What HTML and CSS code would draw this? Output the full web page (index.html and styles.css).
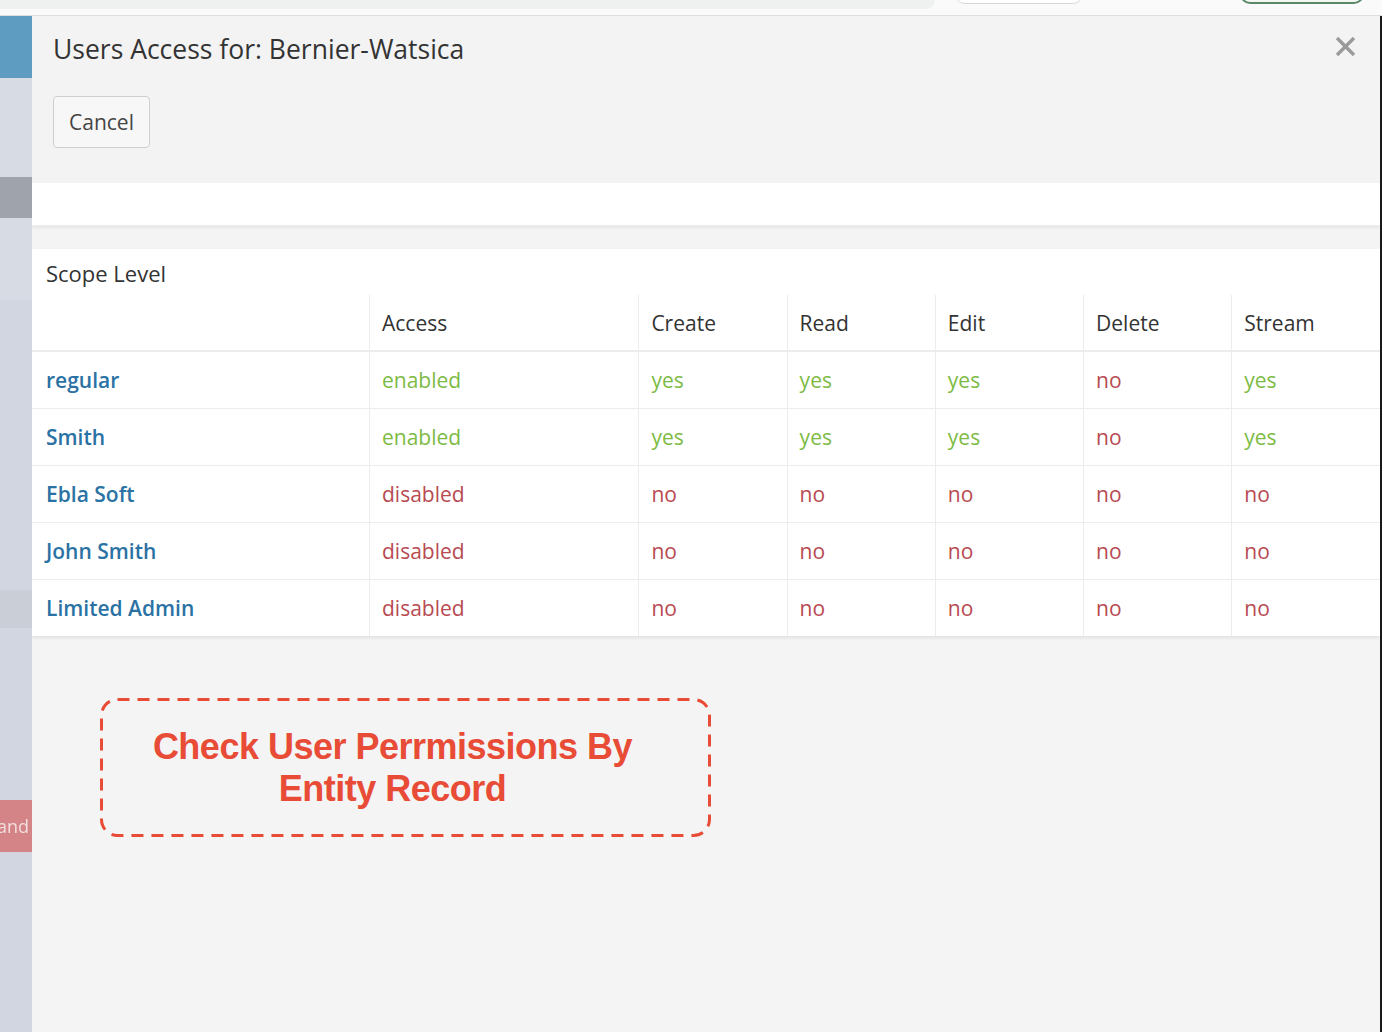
FILE: index.html
```html
<!DOCTYPE html>
<html lang="en">
<head>
<meta charset="utf-8">
<title>Users Access</title>
<link rel="stylesheet" href="styles.css">
</head>
<body>
<div class="page">
  <div class="topbar">
    <div class="pill"></div>
    <div class="ghost-btn"></div>
    <div class="ghost-btn green"></div>
  </div>
  <div class="main">
    <div class="backdrop">
      <div class="band blue"></div>
      <div class="band light h99"></div>
      <div class="band dark"></div>
      <div class="band light h82"></div>
      <div class="band lighter h290"></div>
      <div class="band mid"></div>
      <div class="band lighter h170"></div>
      <div class="band red"><span>and</span></div>
      <div class="band lighter fill"></div>
    </div>
    <div class="modal">
      <div class="modal-header">
        <div class="title-row">
          <h1 class="title">Users Access for: Bernier-Watsica</h1>
          <svg class="close" width="21" height="21" viewBox="0 0 21 21"><path d="M2 2 L19 19 M19 2 L2 19" stroke="#9a9a9a" stroke-width="3.4" stroke-linecap="butt"/></svg>
        </div>
        <button class="btn">Cancel</button>
      </div>
      <div class="white-band"></div>
      <div class="panel">
        <div class="scope">Scope Level</div>
        <table class="grid">
          <colgroup>
            <col class="c-name"><col class="c-access"><col class="c-op"><col class="c-op"><col class="c-op"><col class="c-op"><col class="c-op">
          </colgroup>
          <thead>
            <tr><th></th><th>Access</th><th>Create</th><th>Read</th><th>Edit</th><th>Delete</th><th>Stream</th></tr>
          </thead>
          <tbody>
            <tr><td class="name">regular</td><td class="ok">enabled</td><td class="ok">yes</td><td class="ok">yes</td><td class="ok">yes</td><td class="no">no</td><td class="ok">yes</td></tr>
            <tr><td class="name">Smith</td><td class="ok">enabled</td><td class="ok">yes</td><td class="ok">yes</td><td class="ok">yes</td><td class="no">no</td><td class="ok">yes</td></tr>
            <tr><td class="name">Ebla Soft</td><td class="no">disabled</td><td class="no">no</td><td class="no">no</td><td class="no">no</td><td class="no">no</td><td class="no">no</td></tr>
            <tr><td class="name">John Smith</td><td class="no">disabled</td><td class="no">no</td><td class="no">no</td><td class="no">no</td><td class="no">no</td><td class="no">no</td></tr>
            <tr><td class="name">Limited Admin</td><td class="no">disabled</td><td class="no">no</td><td class="no">no</td><td class="no">no</td><td class="no">no</td><td class="no">no</td></tr>
          </tbody>
        </table>
      </div>
      <div class="note">
        <svg class="note-frame" width="611" height="139" viewBox="0 0 611 139"><rect x="1.5" y="1.5" width="608" height="136" rx="16" ry="16" fill="none" stroke="#e84b36" stroke-width="3" stroke-dasharray="12 8"/></svg>
        <p>Check User Perrmissions By<br>Entity Record</p>
      </div>
    </div>
    <div class="edge"></div>
  </div>
</div>
</body>
</html>
```

FILE: styles.css
```css
* { box-sizing: border-box; }
html, body { margin: 0; padding: 0; }
body {
  width: 1382px;
  height: 1032px;
  overflow: hidden;
  background: #f4f4f4;
  font-family: "Open Sans", "Noto Sans", sans-serif;
  color: #333;
}
.page { width: 1382px; height: 1032px; display: flex; flex-direction: column; }

.topbar {
  height: 16px;
  flex: none;
  background: #fafafa;
  border-bottom: 1px solid #dedede;
  display: flex;
  align-items: flex-start;
  overflow: hidden;
}
.pill {
  width: 935px;
  height: 9px;
  background: #eff0f0;
  border-bottom-right-radius: 12px;
}
.ghost-btn {
  width: 128px;
  height: 20px;
  margin-top: -16px;
  margin-left: 20px;
  border: 1px solid #d8d8d8;
  border-radius: 10px;
  background: #fff;
}
.ghost-btn.green {
  margin-left: 157px;
  width: 124px;
  border: 2px solid #5a8a68;
  background: #f4f7f4;
}

.main { flex: 1; display: flex; min-height: 0; }

.backdrop {
  width: 32px;
  flex: none;
  display: flex;
  flex-direction: column;
  overflow: hidden;
  box-shadow: inset -4px 0 4px -2px rgba(0,0,0,0.18);
  filter: blur(0.6px);
  background: #d1d6e0;
}
.band { flex: none; }
.band.blue { height: 62px; background: #5f9cc2; }
.band.light { background: #d6dbe4; }
.band.h99 { height: 99px; }
.band.dark { height: 41px; background: #9fa4ac; }
.band.h82 { height: 82px; }
.band.lighter { background: #d1d6e0; }
.band.h290 { height: 290px; }
.band.mid { height: 38px; background: #c9ced7; }
.band.h170 { height: 172px; }
.band.red {
  height: 52px;
  background: #d48486;
  color: #f1dede;
  font-size: 18px;
  line-height: 52px;
  margin-left: -3px;
  overflow: hidden;
  white-space: nowrap;
}
.band.fill { flex: 1; }

.modal {
  flex: 1;
  display: flex;
  flex-direction: column;
  background: #f4f4f4;
  min-width: 0;
}
.edge { width: 2px; flex: none; background: #1a1a1a; }

.modal-header {
  background: #f3f3f3;
  height: 167px;
  padding: 15px 24px 0 21px;
}
.title-row {
  display: flex;
  justify-content: space-between;
  align-items: flex-start;
}
.title {
  margin: 0;
  font-weight: 400;
  font-size: 26.5px;
  line-height: 36px;
  color: #333;
}
.close { margin-top: 5px; }
.btn {
  margin-top: 29px;
  width: 97px;
  height: 52px;
  border: 1px solid #cfcfcf;
  border-radius: 4px;
  background: #f7f7f7;
  font-family: "Open Sans", sans-serif;
  font-size: 21px;
  color: #444;
  padding: 0;
}

.white-band {
  height: 43px;
  background: #fff;
  box-shadow: 0 2px 3px rgba(0,0,0,0.06);
  border-bottom: 1px solid #ececec;
}
.panel {
  margin-top: 23px;
  background: #fff;
  box-shadow: 0 2px 3px rgba(0,0,0,0.08);
}
.scope {
  height: 46px;
  padding-left: 14px;
  font-size: 22px;
  line-height: 48px;
  color: #333;
}
.grid {
  width: 100%;
  border-collapse: collapse;
  table-layout: fixed;
  font-size: 21px;
}
.c-name { width: 337px; }
.c-access { width: 269px; }
.c-op { width: 148px; }
.grid th, .grid td {
  text-align: left;
  padding: 0 12px;
  border-left: 1px solid #ececec;
}
.grid th:first-child, .grid td:first-child { border-left: none; padding-left: 14px; }
.grid th {
  height: 56px;
  font-weight: 400;
  color: #333;
  border-bottom: 2px solid #ececec;
}
.grid td {
  height: 57px;
  border-top: 1px solid #ececec;
}
.grid tbody tr:first-child td { border-top: none; }
.name { color: #2b72a4; font-weight: 600; }
.ok { color: #7dbb44; }
.no { color: #b84a52; }

.note {
  position: relative;
  margin: 62px 0 0 68px;
  width: 611px;
  height: 139px;
  display: flex;
  align-items: center;
  justify-content: center;
  padding-right: 26px;
}
.note-frame { position: absolute; left: 0; top: 0; }
.note p {
  margin: 0;
  text-align: center;
  font-family: "Liberation Sans", Arial, sans-serif;
  font-weight: 700;
  font-size: 36px;
  letter-spacing: -0.5px;
  line-height: 42px;
  color: #e84b36;
}
```
